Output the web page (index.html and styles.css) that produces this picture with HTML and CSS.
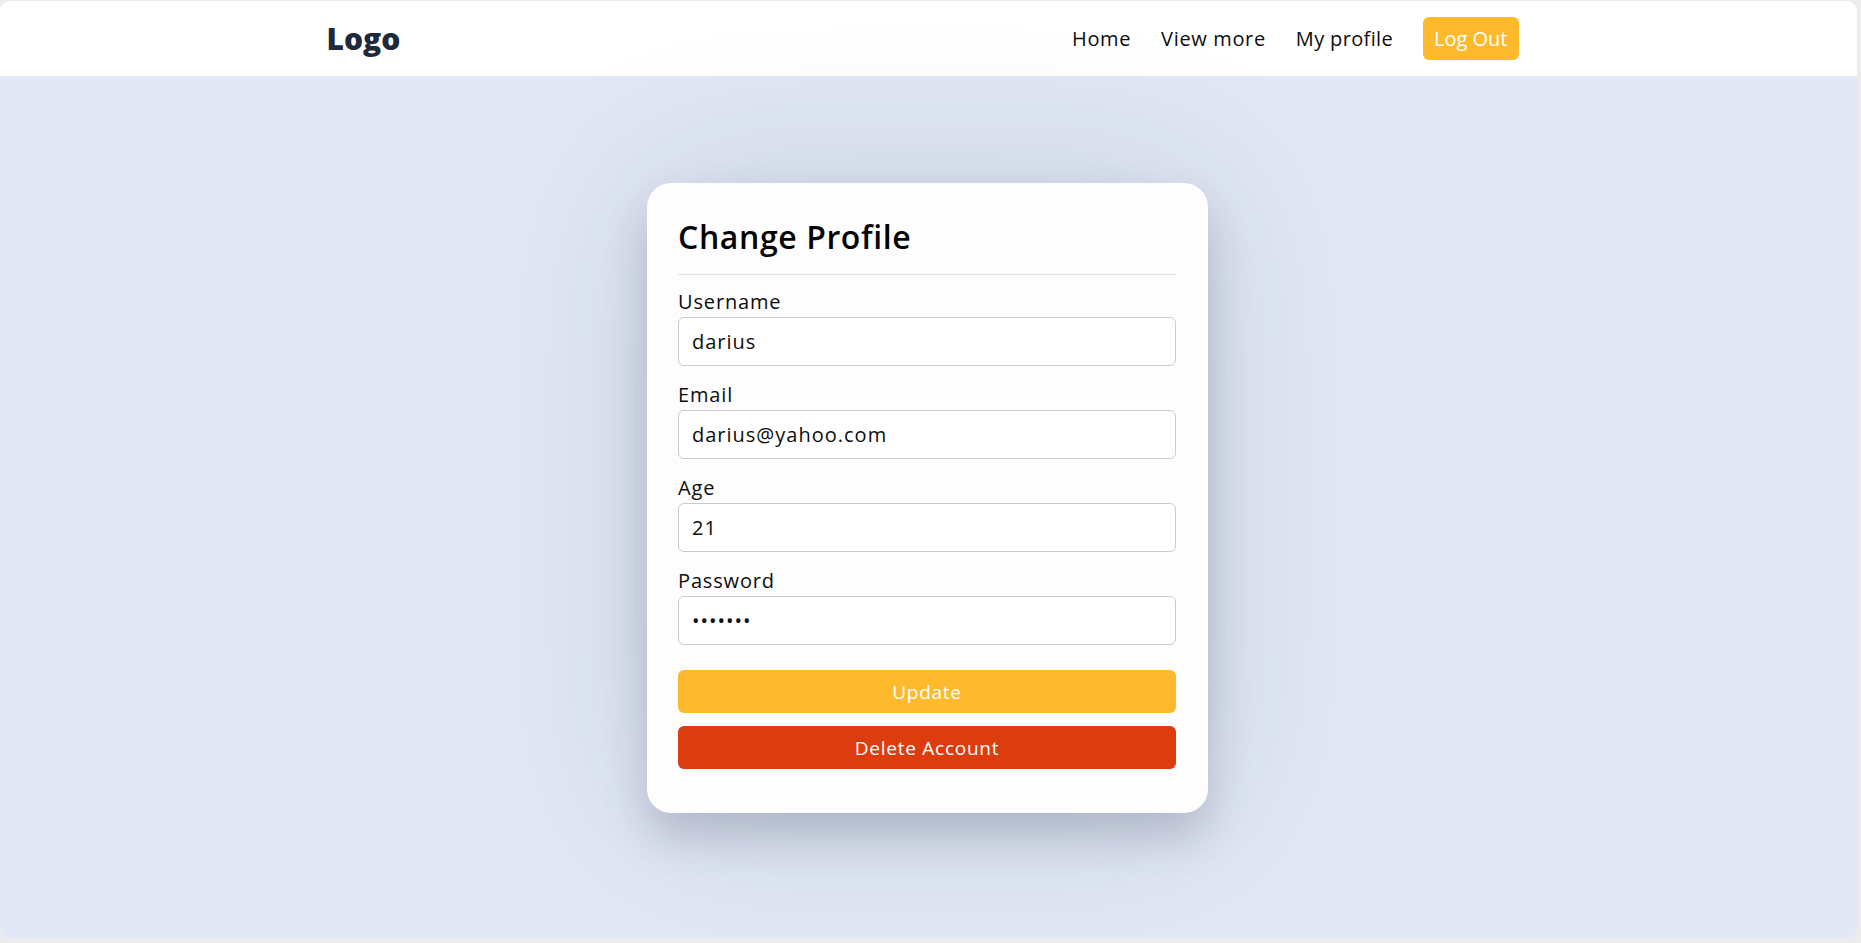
FILE: index.html
```html
<!DOCTYPE html>
<html lang="en">
<head>
<meta charset="utf-8">
<title>Change Profile</title>
<link rel="stylesheet" href="styles.css">
</head>
<body>
<div class="window">
  <header class="topbar">
    <div class="topbar-inner">
      <a class="logo" href="#">Logo</a>
      <nav class="nav">
        <a href="#">Home</a>
        <a href="#">View more</a>
        <a href="#" class="narrow">My profile</a>
        <a href="#" class="logout">Log Out</a>
      </nav>
    </div>
  </header>
  <main class="main">
    <form class="card">
      <h2 class="card-title">Change Profile</h2>
      <div class="field">
        <label for="username">Username</label>
        <input id="username" type="text" value="darius">
      </div>
      <div class="field">
        <label for="email">Email</label>
        <input id="email" type="text" value="darius@yahoo.com">
      </div>
      <div class="field">
        <label for="age">Age</label>
        <input id="age" type="text" value="21">
      </div>
      <div class="field">
        <label for="password">Password</label>
        <input id="password" type="password" value="1234567">
      </div>
      <button type="button" class="btn btn-update">Update</button>
      <button type="button" class="btn btn-delete">Delete Account</button>
    </form>
  </main>
</div>
</body>
</html>
```
FILE: styles.css
```css
* { box-sizing: border-box; }
html, body { margin: 0; height: 100%; }
body {
  background: #ececec;
  padding: 1px 4px 5px 0;
  font-family: "Open Sans", "Noto Sans", sans-serif;
  color: #0d0d0d;
}
.window {
  height: 100%;
  background: #e2e8f5;
  border-radius: 10px;
  overflow: hidden;
  display: flex;
  flex-direction: column;
}
.topbar {
  background: #fff;
  height: 75px;
  flex-shrink: 0;
}
.topbar-inner {
  width: 1204px;
  margin: 0 auto;
  height: 100%;
  display: flex;
  align-items: center;
  justify-content: space-between;
  padding-right: 12px;
}
.logo {
  font-size: 30px;
  font-weight: 800;
  color: #1e293b;
  text-decoration: none;
}
.nav {
  display: flex;
  align-items: center;
  gap: 30px;
}
.nav a {
  font-size: 20px;
  letter-spacing: 0.65px;
  color: #0d0d0d;
  text-decoration: none;
}
.nav a.narrow {
  letter-spacing: 0.35px;
}
.nav a.logout {
  background: #ffb92c;
  color: #fff;
  height: 43px;
  padding: 0 11px;
  letter-spacing: 0;
  display: flex;
  align-items: center;
  border-radius: 6px;
}
.main {
  flex: 1;
  display: flex;
  justify-content: center;
  align-items: flex-start;
  padding-top: 107px;
  padding-right: 2px;
}
.card {
  width: 561px;
  background: #fdfdfd;
  border-radius: 24px;
  padding: 32px 32px 32px 31px;
  box-shadow: 0 24px 44px rgba(30, 41, 70, 0.2), 0 0 170px rgba(30, 41, 70, 0.14);
  display: flex;
  flex-direction: column;
}
.card-title {
  margin: 0 0 14px;
  font-size: 32px;
  line-height: 44px;
  font-weight: 600;
  letter-spacing: 0.6px;
  padding-bottom: 15px;
  border-bottom: 1px solid #e3e3e3;
  color: #050505;
}
.field {
  display: flex;
  flex-direction: column;
  margin-bottom: 16px;
}
.field label {
  font-size: 20px;
  line-height: 26px;
  padding-bottom: 2px;
  letter-spacing: 0.85px;
  color: #0d0d0d;
}
.field input {
  height: 49px;
  border: 1px solid #cbcbcb;
  border-radius: 6px;
  background: #fff;
  padding: 0 13px;
  font-family: inherit;
  font-size: 20px;
  letter-spacing: 1px;
  color: #0d0d0d;
  outline: none;
}
.btn {
  height: 43px;
  border: 0;
  border-radius: 6px;
  color: #fff;
  font-family: inherit;
  font-size: 19px;
  letter-spacing: 0.75px;
  cursor: pointer;
}
.btn-update {
  background: #ffb92c;
  margin-top: 9px;
  margin-bottom: 13px;
}
.btn-delete {
  background: #dd3d0e;
  margin-bottom: 12px;
}
```
